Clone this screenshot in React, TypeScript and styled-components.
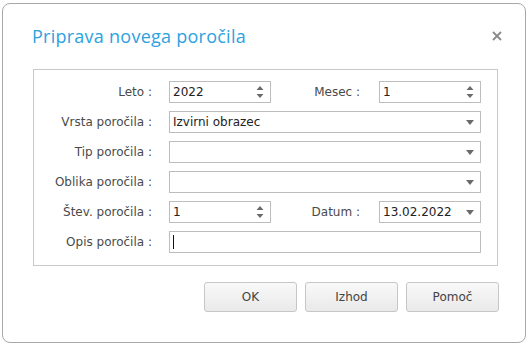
import * as React from 'react';
import styled, { createGlobalStyle } from 'styled-components';

const GlobalStyle = createGlobalStyle`
    html, body {
        margin: 0;
        padding: 0;
        background: #ffffff;
    }
    body {
        font-family: 'DejaVu Sans', 'Liberation Sans', sans-serif;
    }
`;

const App: React.FC = () => {
    return (
        <Page>
            <GlobalStyle />
            <Dialog>
                <TitleBar>
                    <Title>Priprava novega poročila</Title>
                    <CloseButton aria-label="close">
                        <svg width="10" height="10" viewBox="0 0 10 10">
                            <path d="M1 1 L9 9 M9 1 L1 9" stroke="#8a8a8a" strokeWidth="1.8" />
                        </svg>
                    </CloseButton>
                </TitleBar>
                <GroupBox>
                    <Row>
                        <Label>Leto :</Label>
                        <SpinInput value="2022" />
                        <SideLabel>Mesec :</SideLabel>
                        <SpinInput value="1" />
                    </Row>
                    <Row>
                        <Label>Vrsta poročila :</Label>
                        <ComboInput value="Izvirni obrazec" wide />
                    </Row>
                    <Row>
                        <Label>Tip poročila :</Label>
                        <ComboInput value="" wide />
                    </Row>
                    <Row>
                        <Label>Oblika poročila :</Label>
                        <ComboInput value="" wide />
                    </Row>
                    <Row>
                        <Label>Štev. poročila :</Label>
                        <SpinInput value="1" />
                        <SideLabel>Datum :</SideLabel>
                        <ComboInput value="13.02.2022" />
                    </Row>
                    <Row>
                        <Label>Opis poročila :</Label>
                        <TextField>
                            <Caret />
                        </TextField>
                    </Row>
                </GroupBox>
                <ButtonBar>
                    <DialogButton>OK</DialogButton>
                    <DialogButton>Izhod</DialogButton>
                    <DialogButton>Pomoč</DialogButton>
                </ButtonBar>
            </Dialog>
        </Page>
    );
};

const SpinInput: React.FC<{ value: string }> = ({ value }) => (
    <Field $width={102}>
        <FieldText>{value}</FieldText>
        <Spinner>
            <svg width="8" height="14" viewBox="0 0 8 14">
                <path d="M4 1 L7.5 5 L0.5 5 Z" fill="#6a6a6a" />
                <path d="M0.5 9 L7.5 9 L4 13 Z" fill="#6a6a6a" />
            </svg>
        </Spinner>
    </Field>
);

const ComboInput: React.FC<{ value: string; wide?: boolean }> = ({ value, wide }) => (
    <Field $width={wide ? 312 : 102}>
        <FieldText>{value}</FieldText>
        <DropArrow>
            <svg width="8" height="5" viewBox="0 0 8 5">
                <path d="M0 0 L8 0 L4 5 Z" fill="#6a6a6a" />
            </svg>
        </DropArrow>
    </Field>
);

const Page = styled.div`
    width: 532px;
    height: 345px;
    padding: 3px 6px 2px 2px;
    box-sizing: border-box;
`;

const Dialog = styled.div`
    width: 524px;
    height: 340px;
    box-sizing: border-box;
    border: 1px solid #a8a8a8;
    border-radius: 8px;
    background: #ffffff;
    padding: 0 27px 0 30px;
    display: flex;
    flex-direction: column;
`;

const TitleBar = styled.div`
    height: 65px;
    display: flex;
    align-items: center;
    justify-content: space-between;
    padding-bottom: 2px;
    box-sizing: border-box;
`;

const Title = styled.h1`
    margin: 0 0 0 -1px;
    font-family: 'Open Sans', 'Liberation Sans', sans-serif;
    font-weight: 400;
    font-size: 18px;
    color: #2ca2df;
    letter-spacing: 0.25px;
`;

const CloseButton = styled.span`
    display: flex;
    width: 10px;
    height: 10px;
    margin-right: -4px;
`;

const GroupBox = styled.div`
    width: 465px;
    height: 197px;
    box-sizing: border-box;
    border: 1px solid #c9c9c9;
    padding: 11px 16px 0 0;
    display: flex;
    flex-direction: column;
    gap: 8px;
`;

const Row = styled.div`
    display: flex;
    align-items: center;
    height: 22px;
`;

const Label = styled.span`
    width: 118px;
    margin-right: 17px;
    text-align: right;
    font-size: 12px;
    color: #4a4a4a;
    white-space: nowrap;
`;

const SideLabel = styled.span`
    width: 89px;
    margin-right: 19px;
    text-align: right;
    font-size: 12px;
    color: #4a4a4a;
    white-space: nowrap;
`;

const Field = styled.div<{ $width: number }>`
    width: ${p => p.$width}px;
    height: 22px;
    box-sizing: border-box;
    border: 1px solid #bdbdbd;
    background: #ffffff;
    display: flex;
    align-items: center;
    padding-left: 3px;
`;

const FieldText = styled.span`
    flex: 1;
    font-size: 12px;
    color: #222222;
    white-space: nowrap;
`;

const Spinner = styled.span`
    display: flex;
    width: 8px;
    margin-right: 6px;
`;

const DropArrow = styled.span`
    display: flex;
    width: 8px;
    margin-right: 6px;
`;

const TextField = styled.div`
    width: 312px;
    height: 22px;
    box-sizing: border-box;
    border: 1px solid #bdbdbd;
    display: flex;
    align-items: center;
    padding-left: 3px;
`;

const Caret = styled.span`
    width: 1px;
    height: 14px;
    background: #111111;
`;

const ButtonBar = styled.div`
    display: flex;
    justify-content: flex-end;
    gap: 8px;
    width: 466px;
    margin-top: 16px;
`;

const DialogButton = styled.button`
    width: 93px;
    height: 30px;
    box-sizing: border-box;
    border: 1px solid #c6c6c6;
    border-radius: 3px;
    background: linear-gradient(#f9f9f9, #e9e9e9);
    font-family: 'DejaVu Sans', 'Liberation Sans', sans-serif;
    font-size: 12px;
    color: #444444;
    padding: 0;
`;

export default App;
